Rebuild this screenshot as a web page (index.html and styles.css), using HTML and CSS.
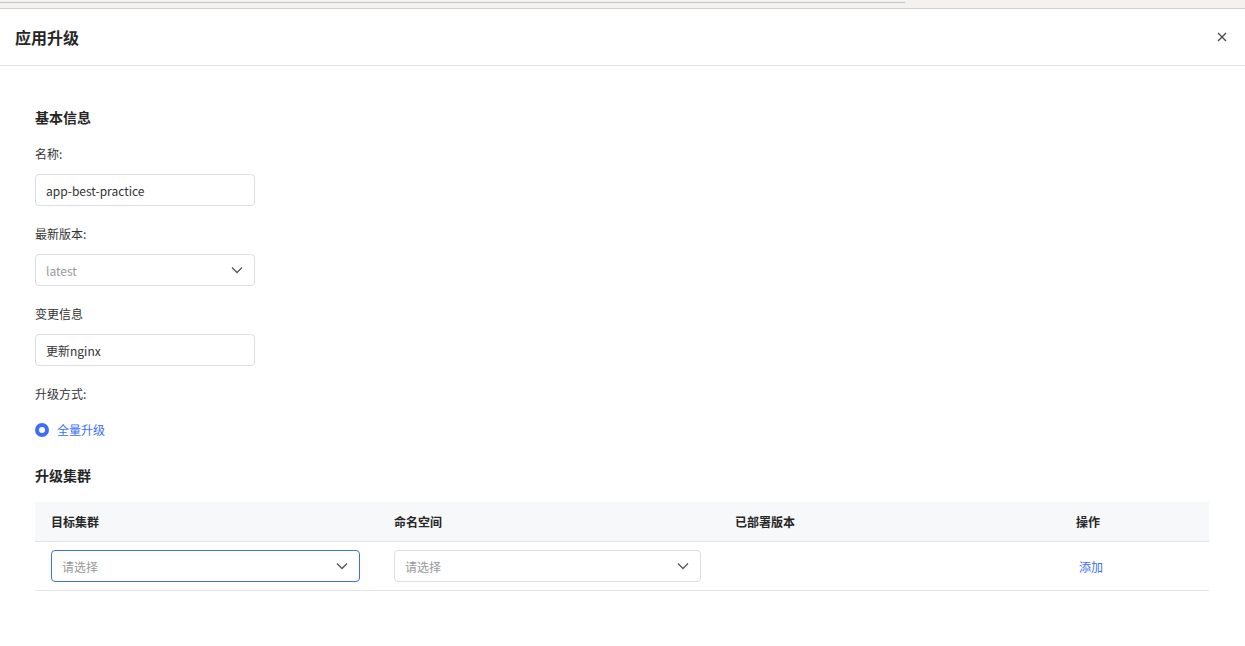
FILE: index.html
```html
<!DOCTYPE html>
<html lang="zh-CN">
<head>
    <meta charset="UTF-8">
    <title>应用升级</title>
    <link rel="stylesheet" href="styles.css">
</head>
<body>
    <div class="topbar"><div class="topbar-tab"></div></div>

    <div class="dialog">
        <div class="dialog-header">
            <h3>应用升级</h3>
            <span class="close">
                <svg width="10" height="10" viewBox="0 0 10 10"><path d="M1 1L9 9M9 1L1 9" stroke="#444" stroke-width="1.2" fill="none"/></svg>
            </span>
        </div>

        <div class="dialog-body">
            <h4>基本信息</h4>

            <div class="form-item">
                <label>名称:</label>
                <div class="input">app-best-practice</div>
            </div>

            <div class="form-item">
                <label>最新版本:</label>
                <div class="input select">
                    <span class="muted">latest</span>
                    <svg class="arrow" width="12" height="8" viewBox="0 0 12 8"><path d="M1 1.5L6 6.5L11 1.5" stroke="#555" stroke-width="1.3" fill="none"/></svg>
                </div>
            </div>

            <div class="form-item">
                <label>变更信息</label>
                <div class="input">更新nginx</div>
            </div>

            <div class="form-item">
                <label>升级方式:</label>
                <div class="radio"><span class="radio-dot"></span>全量升级</div>
            </div>

            <h4 class="section2">升级集群</h4>

            <table class="cluster-table">
                <thead>
                    <tr>
                        <th class="c1">目标集群</th>
                        <th class="c2">命名空间</th>
                        <th class="c3">已部署版本</th>
                        <th class="c4">操作</th>
                    </tr>
                </thead>
                <tbody>
                    <tr>
                        <td>
                            <div class="input select focus">
                                <span class="muted">请选择</span>
                                <svg class="arrow" width="12" height="8" viewBox="0 0 12 8"><path d="M1 1.5L6 6.5L11 1.5" stroke="#555" stroke-width="1.3" fill="none"/></svg>
                            </div>
                        </td>
                        <td>
                            <div class="input select">
                                <span class="muted">请选择</span>
                                <svg class="arrow" width="12" height="8" viewBox="0 0 12 8"><path d="M1 1.5L6 6.5L11 1.5" stroke="#555" stroke-width="1.3" fill="none"/></svg>
                            </div>
                        </td>
                        <td></td>
                        <td><a class="link">添加</a></td>
                    </tr>
                </tbody>
            </table>
        </div>
    </div>
</body>
</html>
```

FILE: styles.css
```css
body {
    margin: 0;
    font-family: "Noto Sans CJK SC", "Noto Sans", sans-serif;
    font-size: 12px;
    color: #333;
    background: #fff;
}
.topbar {
    height: 8px;
    background: #f3f2f0;
    border-bottom: 1px solid #cfcfcf;
}
.topbar-tab {
    width: 905px;
    height: 2px;
    border-bottom: 1px solid #c4c4c4;
}
.dialog-header {
    height: 56px;
    display: flex;
    align-items: center;
    justify-content: space-between;
    padding: 0 18px 0 15px;
    border-bottom: 1px solid #e6e6e6;
}
.dialog-header h3 {
    margin: 0;
    font-size: 16px;
    font-weight: bold;
    color: #262626;
}
.close {
    display: flex;
    margin-top: -1px;
}
.dialog-body {
    padding: 40px 36px 0 35px;
}
h4 {
    margin: 0 0 16px;
    font-size: 14px;
    font-weight: bold;
    color: #262626;
    line-height: 22px;
}
.form-item {
    margin-bottom: 18px;
}
.form-item label {
    display: block;
    line-height: 20px;
    margin-bottom: 10px;
}
.input {
    box-sizing: border-box;
    width: 220px;
    height: 32px;
    padding: 0 11px 0 10px;
    border: 1px solid #dcdde4;
    border-radius: 4px;
    display: flex;
    align-items: center;
    justify-content: space-between;
    color: #333;
}
.muted {
    color: #999;
}
.radio {
    display: flex;
    align-items: center;
    color: #3d6ef5;
    line-height: 20px;
    margin-top: 16px;
}
.radio-dot {
    box-sizing: border-box;
    width: 14px;
    height: 14px;
    border-radius: 50%;
    border: 4.5px solid #3d6ef5;
    background: #fff;
    margin-right: 8px;
}
.section2 {
    margin-top: 24px;
    margin-bottom: 16px;
}
.cluster-table {
    width: 100%;
    border-collapse: collapse;
}
.cluster-table th {
    background: #f7f8fa;
    height: 39px;
    padding: 0 16px;
    text-align: left;
    font-weight: bold;
    color: #262626;
    border-bottom: 1px solid #e3e5ec;
}
.cluster-table td {
    height: 48px;
    padding: 0 16px;
    border-bottom: 1px solid #e3e5ec;
}
.c1 { width: 311px; }
.c2 { width: 309px; }
.c3 { width: 309px; }
.cluster-table td:nth-child(1) .input { width: 309px; }
.cluster-table td:nth-child(2) .input { width: 307px; }
.focus {
    border-color: #3d6ef0;
}
.link {
    color: #3d6ef5;
    padding-left: 3px;
    cursor: pointer;
}
```
